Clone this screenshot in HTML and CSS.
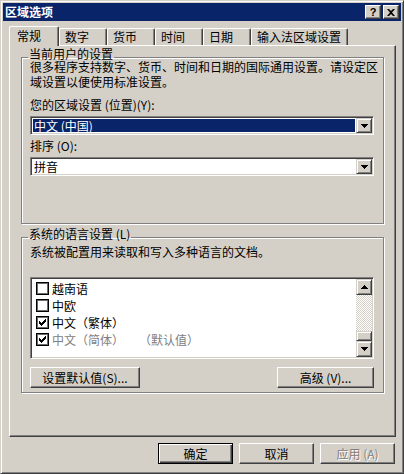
FILE: index.html
```html
<!DOCTYPE html>
<html lang="zh-CN">
<head>
<meta charset="UTF-8">
<meta name="viewport" content="width=device-width, initial-scale=1.0">
<title>区域选项</title>
<link rel="stylesheet" href="styles.css">
</head>
<body>
<div class="window">
  <div class="titlebar">
    <span class="title">区域选项</span>
    <div class="caption-buttons">
      <button class="caption-btn">?</button>
      <button class="caption-btn">
        <svg width="8" height="7" viewBox="0 0 8 7"><path d="M0 0h2l2 2 2-2h2L5 3.5 8 7H6L4 5 2 7H0l3-3.5z" fill="#000"/></svg>
      </button>
    </div>
  </div>

  <div class="content">
    <div class="tabs">
      <div class="tab active">常规</div>
      <div class="tab">数字</div>
      <div class="tab">货币</div>
      <div class="tab">时间</div>
      <div class="tab">日期</div>
      <div class="tab">输入法区域设置</div>
    </div>

    <div class="panel">
      <fieldset class="group group-user">
        <legend>当前用户的设置</legend>
        <p class="desc">很多程序支持数字、货币、时间和日期的国际通用设置。请设定区<br>域设置以便使用标准设置。</p>
        <p class="label">您的区域设置 (位置)(Y):</p>
        <div class="combo">
          <span class="combo-value selected">中文 (中国)</span>
          <span class="drop-btn"><svg width="7" height="4" viewBox="0 0 7 4"><path d="M0 0h7v1h-1v1h-1v1h-1v1h-1v-1h-1v-1h-1v-1h-1z"/></svg></span>
        </div>
        <p class="label label-sort">排序 (O):</p>
        <div class="combo combo-sort">
          <span class="combo-value">拼音</span>
          <span class="drop-btn"><svg width="7" height="4" viewBox="0 0 7 4"><path d="M0 0h7v1h-1v1h-1v1h-1v1h-1v-1h-1v-1h-1v-1h-1z"/></svg></span>
        </div>
      </fieldset>

      <fieldset class="group group-system">
        <legend>系统的语言设置 (L)</legend>
        <p class="desc desc-system">系统被配置用来读取和写入多种语言的文档。</p>
        <div class="listbox">
          <ul class="list">
            <li><span class="check"></span>越南语</li>
            <li><span class="check"></span>中欧</li>
            <li><span class="check"><svg width="7" height="7" viewBox="0 0 7 7"><path d="M6 0h1v3h-1v1h-1v1h-1v1h-1v1h-1v-1h-1v-1h-1v-3h1v1h1v1h1v-1h1v-1h1v-1h1z"/></svg></span>中文（繁体）</li>
            <li class="disabled"><span class="check"><svg width="7" height="7" viewBox="0 0 7 7"><path d="M6 0h1v3h-1v1h-1v1h-1v1h-1v1h-1v-1h-1v-1h-1v-3h1v1h1v1h1v-1h1v-1h1v-1h1z"/></svg></span>中文（简体）<span class="note">（默认值）</span></li>
          </ul>
          <div class="scrollbar">
            <span class="scroll-btn"><svg width="7" height="4" viewBox="0 0 7 4"><path d="M3 0h1v1h1v1h1v1h1v1h-7v-1h1v-1h1v-1h1z"/></svg></span>
            <span class="track"></span>
            <span class="thumb"></span>
            <span class="scroll-btn"><svg width="7" height="4" viewBox="0 0 7 4"><path d="M0 0h7v1h-1v1h-1v1h-1v1h-1v-1h-1v-1h-1v-1h-1z"/></svg></span>
          </div>
        </div>
        <div class="group-buttons">
          <button class="btn btn-default-set">设置默认值(S)...</button>
          <button class="btn btn-advanced">高级 (V)...</button>
        </div>
      </fieldset>
    </div>

    <div class="footer">
      <button class="btn btn-main default">确定</button>
      <button class="btn btn-main">取消</button>
      <button class="btn btn-main" disabled>应用 (A)</button>
    </div>
  </div>
</div>
</body>
</html>
```

FILE: styles.css
```css
* {
  box-sizing: border-box;
}

body {
  margin: 0;
  font-family: "Noto Sans CJK SC", "Noto Sans", sans-serif;
  font-size: 12px;
  color: #000;
  background-color: #d4d0c8;
}

p {
  margin: 0;
}

.window {
  width: 404px;
  height: 474px;
  padding: 2px;
  background-color: #d4d0c8;
  border: 1px solid;
  border-color: #d4d0c8 #404040 #404040 #d4d0c8;
  box-shadow: inset 1px 1px #fff, inset -1px -1px #808080;
}

/* title bar */
.titlebar {
  height: 18px;
  padding: 0 2px;
  background-color: #0a246a;
  display: flex;
  justify-content: space-between;
  align-items: center;
}

.title {
  color: #fff;
  font-weight: bold;
  line-height: 18px;
}

.caption-buttons {
  display: flex;
  gap: 2px;
}

.caption-btn {
  width: 16px;
  height: 14px;
  padding: 0;
  display: flex;
  justify-content: center;
  align-items: center;
  font-family: "Liberation Sans", sans-serif;
  font-size: 11px;
  font-weight: bold;
  line-height: 12px;
  background-color: #d4d0c8;
  border: 1px solid;
  border-color: #fff #404040 #404040 #fff;
  box-shadow: inset -1px -1px #808080;
}

/* tabs */
.content {
  padding: 5px 5px 0 6px;
}

.tabs {
  height: 19px;
  display: flex;
  align-items: flex-end;
}

.tab {
  min-width: 48px;
  height: 17px;
  padding: 0 6px 0 5px;
  line-height: 16px;
  border-top: 1px solid #fff;
  border-left: 1px solid #fff;
  border-right: 1px solid #404040;
  border-radius: 2px 2px 0 0;
  box-shadow: inset -1px 0 #808080;
  white-space: nowrap;
}

.tab.active {
  min-width: 50px;
  height: 20px;
  padding-left: 7px;
  line-height: 18px;
  margin-bottom: -1px;
  position: relative;
  z-index: 1;
  background-color: #d4d0c8;
}

.panel {
  height: 392px;
  padding: 3px 11px 0 11px;
  border: 1px solid;
  border-color: #fff #404040 #404040 #fff;
  box-shadow: inset -1px -1px #808080;
}

/* group boxes */
.group {
  margin: 0;
  padding: 0 9px 0 8px;
  min-width: 0;
  border: 1px solid #808080;
  box-shadow: inset 1px 1px #fff, 1px 1px #fff;
}

.group legend {
  margin-left: -2px;
  padding: 0 1px 6px;
  line-height: 10px;
}

.group-user {
  padding-bottom: 47px;
}

.group-system {
  margin-top: 5px;
  padding-bottom: 4px;
}

.desc {
  margin-top: -6px;
  line-height: 15px;
  white-space: nowrap;
}

.desc-system {
  margin-top: 0;
  line-height: 14px;
}

.label {
  margin-top: 9px;
  line-height: 14px;
}

.label-sort {
  margin-top: 4px;
}

/* combo boxes */
.combo {
  height: 19px;
  margin-top: 4px;
  padding: 1px;
  display: flex;
  gap: 1px;
  background-color: #fff;
  border: 1px solid;
  border-color: #808080 #fff #fff #808080;
  box-shadow: inset 1px 1px #404040, inset -1px -1px #d4d0c8;
}

.combo-value {
  flex: 1;
  margin: 1px 0 1px 1px;
  padding-left: 1px;
  line-height: 13px;
}

.combo-value.selected {
  background-color: #0a246a;
  color: #fff;
}

.drop-btn,
.scroll-btn {
  width: 16px;
  height: 15px;
  display: flex;
  justify-content: center;
  align-items: center;
  background-color: #d4d0c8;
  border: 1px solid;
  border-color: #d4d0c8 #404040 #404040 #d4d0c8;
  box-shadow: inset 1px 1px #fff, inset -1px -1px #808080;
}

/* language list */
.listbox {
  height: 82px;
  margin-top: 18px;
  padding: 1px;
  display: flex;
  background-color: #fff;
  border: 1px solid;
  border-color: #808080 #fff #fff #808080;
  box-shadow: inset 1px 1px #404040, inset -1px -1px #d4d0c8;
}

.list {
  flex: 1;
  margin: 0;
  padding: 1px 0 0 4px;
  list-style: none;
}

.list li {
  height: 17px;
  display: flex;
  align-items: center;
  gap: 3px;
  line-height: 17px;
}

.list li.disabled {
  color: #808080;
}

.check {
  width: 13px;
  height: 13px;
  display: flex;
  justify-content: center;
  align-items: center;
  background-color: #fff;
  border: 1px solid #000;
  box-shadow: inset 0 0 0 1px #6b6b6b;
}

.note {
  margin-left: 12px;
}

.scrollbar {
  width: 16px;
  display: flex;
  flex-direction: column;
}

.scrollbar .scroll-btn {
  height: 16px;
}

.track {
  flex: 1;
  background-image: repeating-conic-gradient(#d4d0c8 0 25%, #fff 0 50%);
  background-size: 2px 2px;
}

.thumb {
  height: 10px;
  background-color: #d4d0c8;
  border: 1px solid;
  border-color: #d4d0c8 #404040 #404040 #d4d0c8;
  box-shadow: inset 1px 1px #fff, inset -1px -1px #808080;
}

/* buttons */
.btn {
  height: 21px;
  padding: 0;
  font-family: inherit;
  font-size: 12px;
  color: #000;
  background-color: #d4d0c8;
  border: 1px solid;
  border-color: #fff #404040 #404040 #fff;
  box-shadow: inset -1px -1px #808080;
}

.btn.default {
  border-color: #000;
  box-shadow: inset 1px 1px #fff, inset -1px -1px #404040, inset -2px -2px #808080;
}

.btn:disabled {
  color: #808080;
  text-shadow: 1px 1px #fff;
}

.group-buttons {
  margin-top: 8px;
  display: flex;
  justify-content: space-between;
}

.btn-default-set {
  width: 110px;
}

.btn-advanced {
  width: 97px;
}

.footer {
  margin-top: 6px;
  padding-right: 1px;
  display: flex;
  justify-content: flex-end;
  gap: 6px;
}

.btn-main {
  width: 75px;
}
```
